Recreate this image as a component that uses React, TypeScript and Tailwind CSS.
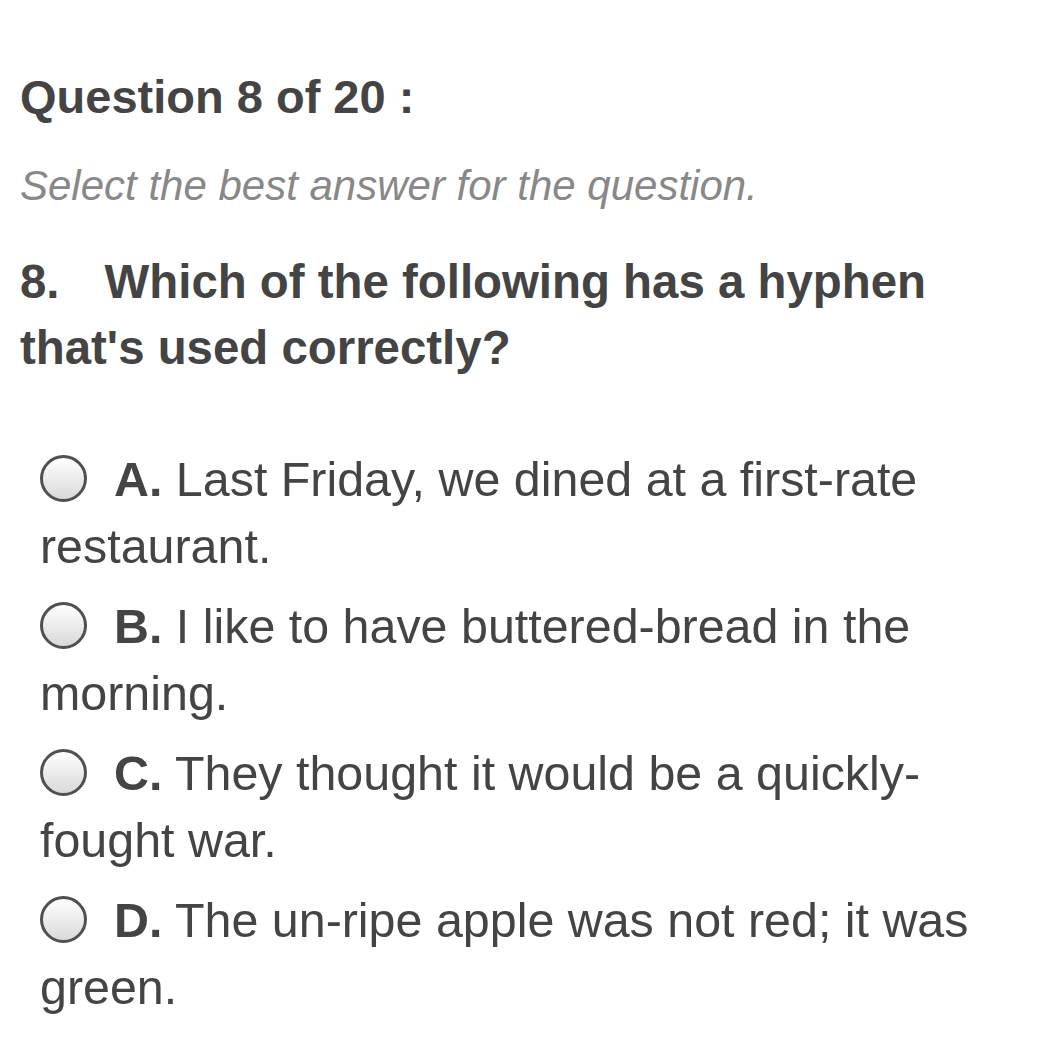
const options = [
  { letter: "A.", text: "Last Friday, we dined at a first-rate restaurant." },
  { letter: "B.", text: "I like to have buttered-bread in the morning." },
  { letter: "C.", text: "They thought it would be a quickly-fought war." },
  { letter: "D.", text: "The un-ripe apple was not red; it was green." },
];

function Radio() {
  return (
    <span className="inline-block w-[47px] h-[47px] rounded-full border-[3px] border-[#505050] bg-gradient-to-b from-white to-[#d9d9d9] align-[-6px] mr-[27px]" />
  );
}

export default function App() {
  return (
    <div className="min-h-[1045px] w-full bg-white pl-[20px] pr-[36px] pt-[69px] text-[#444444] font-['Liberation_Sans',Arial,sans-serif]">
      <h1 className="text-[47px] leading-[56px] font-bold">Question 8 of 20 :</h1>

      <p className="mt-[36px] text-[42px] leading-[50px] italic text-[#888888]">
        Select the best answer for the question.
      </p>

      <h2 className="mt-[38px] text-[47.4px] leading-[66px] font-bold">
        8.<span className="ml-[45px]">Which of the following has a hyphen that's used correctly?</span>
      </h2>

      <div className="mt-[65px] pl-[20px] flex flex-col gap-[13px]">
        {options.map((o) => (
          <p key={o.letter} className="text-[48.4px] leading-[67px]">
            <Radio />
            <span className="font-bold">{o.letter}</span> {o.text}
          </p>
        ))}
      </div>
    </div>
  );
}
